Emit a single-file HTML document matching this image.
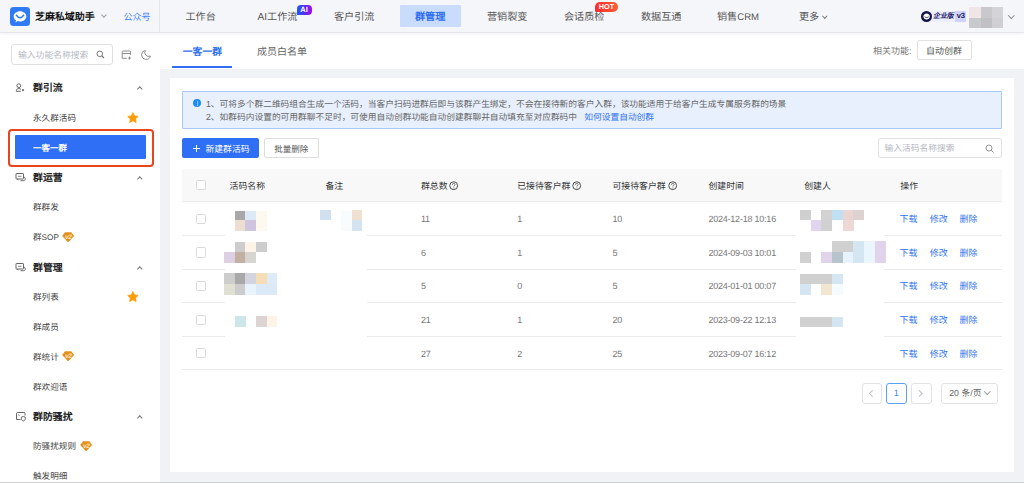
<!DOCTYPE html>
<html lang="zh-CN"><head><meta charset="utf-8">
<style>
*{margin:0;padding:0;box-sizing:border-box}
html,body{width:1024px;height:483px;overflow:hidden;background:#fff;text-rendering:geometricPrecision;font-family:"Liberation Sans",sans-serif;color:#333}
.a{position:absolute;white-space:nowrap}
#hdr{position:absolute;z-index:5;left:0;top:0;width:1024px;height:33px;background:#f5f6fa;border-bottom:1px solid #e6e7ea;box-shadow:0 1px 3px rgba(0,0,0,.06)}
#side{position:absolute;left:0;top:33px;width:160px;height:450px;background:#fff}
#main{position:absolute;left:160px;top:69px;width:864px;height:414px;background:#f1f2f6}
#tabs{position:absolute;left:160px;top:33px;width:864px;height:36px;background:#fff}
#card{position:absolute;left:169.5px;top:78px;width:844.5px;height:394px;background:#fff}
.nav{position:absolute;top:11px;font-size:10.15px;line-height:14px;color:#555}
.sh{position:absolute;left:33px;font-size:9.9px;font-weight:bold;color:#222;line-height:14px}
.si{position:absolute;left:33px;font-size:8.6px;color:#444;line-height:14px}
.car{position:absolute;left:138px;width:3.6px;height:3.6px;border-left:1px solid #777;border-top:1px solid #777;transform:rotate(45deg)}
.th{position:absolute;top:179.5px;font-size:8.9px;color:#333;line-height:13px}
.td{position:absolute;font-size:9px;letter-spacing:-.22px;color:#787878;line-height:13px}
.cb{position:absolute;left:195.6px;width:10.3px;height:10.3px;border:1px solid #d9d9d9;border-radius:1.5px;background:#fff}
.hl{position:absolute;left:182px;width:820px;height:1px;background:#ebebec}
.lk{position:absolute;font-size:9px;color:#2f74f0;line-height:13px}
.q{display:inline-block;width:9px;height:9px;border:1px solid #444;border-radius:50%;font-size:7px;line-height:7px;text-align:center;vertical-align:-1px;margin-left:2px;font-weight:bold}
.m{position:absolute;width:10.6px;height:10.6px}
.btn{position:absolute;border:1px solid #e0e0e2;border-radius:2px;background:#fff}
</style></head><body>

<div id="hdr">
 <div class="a" style="left:10px;top:7px;width:19.5px;height:19px;background:#2f7bf6;border-radius:3.5px"></div>
 <svg class="a" style="left:10px;top:7px" width="20" height="19" viewBox="0 0 20 19"><path d="M10 4.3c3.5 0 6.3 2.3 6.3 5.1s-2.8 5-6.3 5c-.8 0-1.5-.1-2.2-.3l-2.4 1.3.6-2C4.5 12.5 3.7 11 3.7 9.4 3.7 6.6 6.5 4.3 10 4.3z" fill="#fff"/><path d="M6.4 8.2Q10 13.2 13.6 8.2" stroke="#2f7bf6" stroke-width="1.5" fill="none" stroke-linecap="round"/></svg>
 <div class="a" style="left:35px;top:11px;font-size:9.95px;line-height:14px;font-weight:bold;color:#111">芝麻私域助手</div>
 <div class="a" style="left:101.5px;top:12.8px;width:3.8px;height:3.8px;border-right:1px solid #9a9a9a;border-bottom:1px solid #9a9a9a;transform:rotate(45deg)"></div>
 <div class="a" style="left:123.5px;top:11.4px;font-size:9px;line-height:13px;color:#4285f5">公众号</div>
 <div class="a" style="left:159px;top:0;width:1px;height:32px;background:#e4e6ee"></div>
 <div class="nav" style="left:185.5px">工作台</div>
 <div class="nav" style="left:257.5px">AI工作流</div>
 <div class="a" style="left:296.5px;top:4.5px;width:15px;height:10.5px;border-radius:4px 4px 4px 0;background:linear-gradient(90deg,#1d5af8,#5a2cf0 55%,#a80ae8);color:#fff;font-size:7.5px;font-weight:bold;line-height:10.5px;text-align:center">AI</div>
 <div class="nav" style="left:334px">客户引流</div>
 <div class="a" style="left:400px;top:5px;width:61px;height:22px;background:#c9dcfb;border-radius:1px"></div>
 <div class="nav" style="left:415px;color:#2f6ff0;font-weight:bold">群管理</div>
 <div class="nav" style="left:487px">营销裂变</div>
 <div class="nav" style="left:564px">会话质检</div>
 <div class="a" style="left:594.8px;top:2.1px;width:23.3px;height:9.5px;border-radius:5px 5px 5px 1px;background:linear-gradient(90deg,#ff2b2e,#ff5c33);color:#fff;font-size:7.2px;font-weight:bold;line-height:9.5px;text-align:center">HOT</div>
 <div class="nav" style="left:641px">数据互通</div>
 <div class="nav" style="left:717px">销售<span style="font-size:9.6px">CRM</span></div>
 <div class="nav" style="left:799px">更多</div>
 <div class="a" style="left:822.5px;top:14px;width:3.6px;height:3.6px;border-right:1px solid #777;border-bottom:1px solid #777;transform:rotate(45deg)"></div>
 <div class="a" style="left:931px;top:10.6px;width:35px;height:11px;background:#eceefd"></div>
 <div class="a" style="left:955px;top:10.6px;width:11px;height:11px;background:#cfd3fb"></div>
 <div class="a" style="left:920.6px;top:10.6px;width:11.2px;height:11.2px;border-radius:50%;background:#14154a"></div>
 <svg class="a" style="left:920.6px;top:10.6px" width="11.2" height="11.2" viewBox="0 0 12 12"><path d="M2.6 5.2c.3-1.6 1.7-2.6 3.4-2.6s3.1 1 3.4 2.6v.6c0 1.9-1.5 3.2-3.4 3.2S2.6 7.7 2.6 5.8z" fill="#fff"/><path d="M3.8 6.2c1 1 3.4 1 4.4 0" stroke="#14154a" stroke-width=".9" fill="none"/></svg>
 <div class="a" style="left:933px;top:10.5px;font-size:6.9px;line-height:12px;font-style:italic;font-weight:bold;color:#23236e">企业版</div>
 <div class="a" style="left:956.8px;top:10.3px;font-size:7.6px;line-height:12px;color:#1c1c58;letter-spacing:-.3px;font-weight:bold">v3</div>
 <div class="a" style="left:969px;top:7px;width:11.5px;height:10.5px;background:#f1e6e6"></div>
 <div class="a" style="left:980.5px;top:7px;width:11px;height:10.5px;background:#c9c9cd"></div>
 <div class="a" style="left:991.5px;top:7px;width:11.5px;height:10.5px;background:#d4d4d8"></div>
 <div class="a" style="left:969px;top:17.5px;width:11.5px;height:10.5px;background:#c8c9cd"></div>
 <div class="a" style="left:980.5px;top:17.5px;width:11px;height:10.5px;background:#c1c1c5"></div>
 <div class="a" style="left:991.5px;top:17.5px;width:11.5px;height:10.5px;background:#d0d0d4"></div>
 <div class="a" style="left:1008.5px;top:12.5px;width:4.5px;height:4.5px;border-right:1px solid #888;border-bottom:1px solid #888;transform:rotate(45deg)"></div>
</div>


<div id="side">
 <div class="a" style="left:11px;top:11px;width:102px;height:20.5px;border:1px solid #e0e0e2;border-radius:3px"></div>
 <div class="a" style="left:18px;top:15.5px;font-size:8.8px;line-height:13px;color:#b5b8bf">输入功能名称搜索</div>
 <svg class="a" style="left:96px;top:17px" width="9" height="9" viewBox="0 0 9 9"><circle cx="3.8" cy="3.8" r="2.8" stroke="#777" stroke-width="1" fill="none"/><path d="M5.9 5.9 8 8" stroke="#777" stroke-width="1.1"/></svg>
 <svg class="a" style="left:121px;top:16.5px" width="11" height="10" viewBox="0 0 11 10"><path d="M5.8 8.3H1.2V1.9q0-.9.9-.9h6.6q.9 0 .9.9v3" stroke="#8a8a8a" stroke-width=".95" fill="none"/><path d="M1.2 3.5h8.4" stroke="#8a8a8a" stroke-width=".95"/><path d="M8.5 6.6v3M7 8.1h3" stroke="#8a8a8a" stroke-width=".95"/></svg>
 <svg class="a" style="left:140px;top:15.5px" width="12" height="12" viewBox="0 0 12 12"><path d="M5.4 1.4A4.5 4.5 0 1 0 10.4 7 3.9 3.9 0 0 1 5.4 1.4z" stroke="#8a8a8a" stroke-width=".95" fill="none" stroke-linejoin="round"/></svg>

 <svg class="a" style="left:15px;top:48.5px" width="12" height="12" viewBox="0 0 12 12"><circle cx="3.8" cy="3.7" r="1.9" stroke="#555" stroke-width="0.9" fill="none"/><path d="M1.4 9.3V8.4c0-1.1 1.1-1.9 2.4-1.9 1 0 1.8.4 2.2 1" stroke="#555" stroke-width="0.9" fill="none"/><path d="M1.4 9.3h4.4" stroke="#555" stroke-width="0.9"/><path d="M6.9 8.1h2.2M8 7v2.2" stroke="#555" stroke-width="0.9"/></svg>
 <div class="sh" style="top:48.5px">群引流</div>
 <div class="car" style="top:54px"></div>
 <div class="si" style="top:77.5px">永久群活码</div>
 <svg class="a" style="left:126.9px;top:78.6px" width="11.8" height="11.2" viewBox="0 0 24 23"><path d="M12 1.2l3.3 6.8 7.4 1.1-5.4 5.2 1.3 7.4L12 18.2l-6.6 3.5 1.3-7.4-5.4-5.2 7.4-1.1z" fill="#ff9b05" stroke="#ff9b05" stroke-width="1.6" stroke-linejoin="round"/></svg>
 <div class="a" style="left:8.3px;top:95.8px;width:146px;height:38.5px;border:2px solid #e8441f;border-radius:4px"></div>
 <div class="a" style="left:15px;top:102px;width:131px;height:24px;background:#2f6ff5;border-radius:1px"></div>
 <div class="a" style="left:33px;top:107.5px;font-size:8.5px;line-height:14px;color:#fff;font-weight:bold">一客一群</div>

 <svg class="a" style="left:15px;top:139px" width="12" height="12" viewBox="0 0 12 12"><rect x="1" y="1.5" width="7.5" height="5.5" rx="0.6" stroke="#555" stroke-width="0.9" fill="none"/><path d="M3 4.3h3.5" stroke="#777" stroke-width="0.9"/><path d="M8.5 5c1.3.2 1.8.9 1.8 1.9 0 1.1-.8 1.8-2 1.8H5.6" stroke="#555" stroke-width="0.9" fill="none"/><path d="M2.5 7l.6 1.2" stroke="#555" stroke-width="0.9"/></svg>
 <div class="sh" style="top:138.5px">群运营</div>
 <div class="car" style="top:144px"></div>
 <div class="si" style="top:167px">群群发</div>
 <div class="si" style="top:197px">群<span style="font-size:8.2px">SOP</span></div>
 <svg class="a" style="left:61.9px;top:198.7px" width="12.4" height="10.6" viewBox="0 0 12.4 10.6"><path d="M3.1.3h6.2l2.9 3.6-6 6.5-6-6.5z" fill="#e3901e"/><text x="6.3" y="7.4" font-size="6.6" fill="#fbe3c0" text-anchor="middle" font-family="Liberation Sans" font-style="italic" font-weight="bold" letter-spacing="-.4">v2</text></svg>

 <svg class="a" style="left:15px;top:229px" width="12" height="12" viewBox="0 0 12 12"><rect x="1" y="1.5" width="7.5" height="5.5" rx="0.6" stroke="#555" stroke-width="0.9" fill="none"/><path d="M3 4.3h3.5" stroke="#777" stroke-width="0.9"/><path d="M8.5 5c1.3.2 1.8.9 1.8 1.9 0 1.1-.8 1.8-2 1.8H5.6" stroke="#555" stroke-width="0.9" fill="none"/><path d="M2.5 7l.6 1.2" stroke="#555" stroke-width="0.9"/></svg>
 <div class="sh" style="top:228.5px">群管理</div>
 <div class="car" style="top:234px"></div>
 <div class="si" style="top:257px">群列表</div>
 <svg class="a" style="left:126.9px;top:258.3px" width="11.8" height="11.2" viewBox="0 0 24 23"><path d="M12 1.2l3.3 6.8 7.4 1.1-5.4 5.2 1.3 7.4L12 18.2l-6.6 3.5 1.3-7.4-5.4-5.2 7.4-1.1z" fill="#ff9b05" stroke="#ff9b05" stroke-width="1.6" stroke-linejoin="round"/></svg>
 <div class="si" style="top:286.5px">群成员</div>
 <div class="si" style="top:317px">群统计</div>
 <svg class="a" style="left:61.9px;top:317.7px" width="12.4" height="10.6" viewBox="0 0 12.4 10.6"><path d="M3.1.3h6.2l2.9 3.6-6 6.5-6-6.5z" fill="#e3901e"/><text x="6.3" y="7.4" font-size="6.6" fill="#fbe3c0" text-anchor="middle" font-family="Liberation Sans" font-style="italic" font-weight="bold" letter-spacing="-.4">v2</text></svg>
 <div class="si" style="top:347px">群欢迎语</div>

 <svg class="a" style="left:15px;top:378px" width="12" height="12" viewBox="0 0 12 12"><path d="M1.5 8.5V2.5c0-.6.4-1 1-1h6.5c.6 0 1 .4 1 1v2" stroke="#555" stroke-width="0.9" fill="none"/><path d="M1.5 8.5h4" stroke="#555" stroke-width="0.9"/><path d="M3 3.5l1.5 1" stroke="#777" stroke-width="0.9"/><path d="M8.3 5.5l2 .7v1.6c0 1-.9 1.8-2 2.2-1.1-.4-2-1.2-2-2.2V6.2z" stroke="#555" stroke-width="0.9" fill="none"/></svg>
 <div class="sh" style="top:377.8px">群防骚扰</div>
 <div class="car" style="top:383px"></div>
 <div class="si" style="top:406px">防骚扰规则</div>
 <svg class="a" style="left:79.5px;top:407.7px" width="12.4" height="10.6" viewBox="0 0 12.4 10.6"><path d="M3.1.3h6.2l2.9 3.6-6 6.5-6-6.5z" fill="#e3901e"/><text x="6.3" y="7.4" font-size="6.6" fill="#fbe3c0" text-anchor="middle" font-family="Liberation Sans" font-style="italic" font-weight="bold" letter-spacing="-.4">v2</text></svg>
 <div class="si" style="top:435.5px">触发明细</div>
</div>


<div id="tabs">
 <div class="a" style="left:22.8px;top:13px;font-size:9.8px;line-height:14px;color:#2f6ff0;font-weight:bold">一客一群</div>
 <div class="a" style="left:12px;top:33px;width:60px;height:2px;background:#2f6ff0"></div>
 <div class="a" style="left:97px;top:12.5px;font-size:10px;line-height:14px;color:#666">成员白名单</div>
 <div class="a" style="left:713px;top:12px;font-size:9px;line-height:13px;color:#777">相关功能:</div>
 <div class="a" style="left:757px;top:7px;width:55px;height:20px;border:1px solid #e0e0e0;border-radius:2px"></div>
 <div class="a" style="left:766px;top:11.5px;font-size:9px;line-height:13px;color:#555">自动创群</div>
</div>

<div id="main"></div>

<div id="card"></div>
<div class="a" style="left:182px;top:91px;width:820px;height:37.5px;background:#e8f0fd;border:1px solid #a9c9f6;border-radius:1px"></div>
<div class="a" style="left:192.9px;top:98.8px;width:8.4px;height:8.4px;border-radius:50%;background:#1b8cfb"></div>
<div class="a" style="left:196.6px;top:100.5px;width:1px;height:1px;background:rgba(255,255,255,.55)"></div>
<div class="a" style="left:196.6px;top:102.2px;width:1px;height:3.4px;background:rgba(255,255,255,.55)"></div>
<div class="a" style="left:206px;top:97.5px;font-size:8.72px;line-height:13px;color:#666">1、可将多个群二维码组合生成一个活码，当客户扫码进群后即与该群产生绑定，不会在接待新的客户入群，该功能适用于给客户生成专属服务群的场景</div>
<div class="a" style="left:206px;top:110.7px;font-size:8.72px;line-height:13px;color:#666">2、如群码内设置的可用群聊不足时，可使用自动创群功能自动创建群聊并自动填充至对应群码中&nbsp;&nbsp;&nbsp;<span style="color:#2f74f0">如何设置自动创群</span></div>

<div class="a" style="left:182px;top:138px;width:77px;height:20.2px;background:#2f6ff5;border-radius:2px"></div>
<div class="a" style="left:193px;top:148.2px;width:7px;height:1.2px;background:#fff"></div>
<div class="a" style="left:196px;top:145.2px;width:1.2px;height:7px;background:#fff"></div>
<div class="a" style="left:205.5px;top:143px;font-size:8.8px;line-height:13px;color:#fff">新建群活码</div>
<div class="a" style="left:264.4px;top:138px;width:54.3px;height:20.2px;border:1px solid #dedede;border-radius:2px;background:#fff"></div>
<div class="a" style="left:274.3px;top:143px;font-size:8.5px;line-height:13px;color:#555">批量删除</div>

<div class="a" style="left:877.5px;top:138px;width:124px;height:20.2px;border:1px solid #e0e0e2;border-radius:3px;background:#fff"></div>
<div class="a" style="left:884.6px;top:142.2px;font-size:8.75px;line-height:13px;color:#b5b8bf">输入活码名称搜索</div>
<svg class="a" style="left:985px;top:143.5px" width="10" height="10" viewBox="0 0 10 10"><circle cx="4" cy="4" r="3" stroke="#8a8a8a" stroke-width=".9" fill="none"/><path d="M6.2 6.2 8.5 8.5" stroke="#8a8a8a" stroke-width="1"/></svg>

<div class="a" style="left:182px;top:168.8px;width:820px;height:33px;background:#f8f8f9"></div>
<div class="hl" style="top:201.4px"></div>
<div class="hl" style="top:235.0px"></div>
<div class="hl" style="top:268.6px"></div>
<div class="hl" style="top:302.2px"></div>
<div class="hl" style="top:335.8px"></div>
<div class="hl" style="top:369.4px"></div>
<div class="cb" style="top:180.2px"></div>
<div class="th" style="left:229.6px">活码名称</div>
<div class="th" style="left:325.4px">备注</div>
<div class="th" style="left:421px">群总数<svg style="position:absolute;right:-11.2px;top:1.9px" width="9.4" height="9.4" viewBox="0 0 10 10"><circle cx="5" cy="5" r="4.2" stroke="#444" stroke-width="1" fill="none"/><path d="M3.6 4c0-.9.6-1.5 1.4-1.5s1.4.5 1.4 1.3c0 .9-1.2 1-1.2 1.9v.3" stroke="#555" stroke-width=".9" fill="none"/><circle cx="5.2" cy="7.4" r=".55" fill="#555"/></svg></div>
<div class="th" style="left:517.2px">已接待客户群<svg style="position:absolute;right:-11.2px;top:1.9px" width="9.4" height="9.4" viewBox="0 0 10 10"><circle cx="5" cy="5" r="4.2" stroke="#444" stroke-width="1" fill="none"/><path d="M3.6 4c0-.9.6-1.5 1.4-1.5s1.4.5 1.4 1.3c0 .9-1.2 1-1.2 1.9v.3" stroke="#555" stroke-width=".9" fill="none"/><circle cx="5.2" cy="7.4" r=".55" fill="#555"/></svg></div>
<div class="th" style="left:612.5px">可接待客户群<svg style="position:absolute;right:-11.2px;top:1.9px" width="9.4" height="9.4" viewBox="0 0 10 10"><circle cx="5" cy="5" r="4.2" stroke="#444" stroke-width="1" fill="none"/><path d="M3.6 4c0-.9.6-1.5 1.4-1.5s1.4.5 1.4 1.3c0 .9-1.2 1-1.2 1.9v.3" stroke="#555" stroke-width=".9" fill="none"/><circle cx="5.2" cy="7.4" r=".55" fill="#555"/></svg></div>
<div class="th" style="left:708.4px">创建时间</div>
<div class="th" style="left:804.2px">创建人</div>
<div class="th" style="left:900.3px">操作</div>
<div class="cb" style="top:213.7px"></div>
<div class="td" style="left:421px;top:213.2px">11</div>
<div class="td" style="left:517.2px;top:213.2px">1</div>
<div class="td" style="left:612.5px;top:213.2px">10</div>
<div class="td" style="left:708.4px;top:213.2px">2024-12-18 10:16</div>
<div class="lk" style="left:899.4px;top:213.2px">下载</div>
<div class="lk" style="left:929.7px;top:213.2px">修改</div>
<div class="lk" style="left:959.4px;top:213.2px">删除</div>
<div class="cb" style="top:247.3px"></div>
<div class="td" style="left:421px;top:246.8px">6</div>
<div class="td" style="left:517.2px;top:246.8px">1</div>
<div class="td" style="left:612.5px;top:246.8px">5</div>
<div class="td" style="left:708.4px;top:246.8px">2024-09-03 10:01</div>
<div class="lk" style="left:899.4px;top:246.8px">下载</div>
<div class="lk" style="left:929.7px;top:246.8px">修改</div>
<div class="lk" style="left:959.4px;top:246.8px">删除</div>
<div class="cb" style="top:280.9px"></div>
<div class="td" style="left:421px;top:280.4px">5</div>
<div class="td" style="left:517.2px;top:280.4px">0</div>
<div class="td" style="left:612.5px;top:280.4px">5</div>
<div class="td" style="left:708.4px;top:280.4px">2024-01-01 00:07</div>
<div class="lk" style="left:899.4px;top:280.4px">下载</div>
<div class="lk" style="left:929.7px;top:280.4px">修改</div>
<div class="lk" style="left:959.4px;top:280.4px">删除</div>
<div class="cb" style="top:314.5px"></div>
<div class="td" style="left:421px;top:314.0px">21</div>
<div class="td" style="left:517.2px;top:314.0px">1</div>
<div class="td" style="left:612.5px;top:314.0px">20</div>
<div class="td" style="left:708.4px;top:314.0px">2023-09-22 12:13</div>
<div class="lk" style="left:899.4px;top:314.0px">下载</div>
<div class="lk" style="left:929.7px;top:314.0px">修改</div>
<div class="lk" style="left:959.4px;top:314.0px">删除</div>
<div class="cb" style="top:348.1px"></div>
<div class="td" style="left:421px;top:347.6px">27</div>
<div class="td" style="left:517.2px;top:347.6px">2</div>
<div class="td" style="left:612.5px;top:347.6px">25</div>
<div class="td" style="left:708.4px;top:347.6px">2023-09-07 16:12</div>
<div class="lk" style="left:899.4px;top:347.6px">下载</div>
<div class="lk" style="left:929.7px;top:347.6px">修改</div>
<div class="lk" style="left:959.4px;top:347.6px">删除</div>
<div class="a" style="left:224.6px;top:202.5px;width:142.4px;height:134px;background:#fff"></div>
<div class="a" style="left:796px;top:202.5px;width:88px;height:134px;background:#fff"></div>
<div class="a" style="left:234.8px;top:210.6px;width:10.9px;height:9.8px;background:#a8a8a8"></div>
<div class="a" style="left:245.2px;top:210.6px;width:10.9px;height:9.8px;background:#dde9f7"></div>
<div class="a" style="left:256px;top:210.6px;width:10.9px;height:9.8px;background:#fdf9ee"></div>
<div class="a" style="left:234.8px;top:220.1px;width:10.9px;height:11.0px;background:#ecdfd0"></div>
<div class="a" style="left:245.2px;top:220.1px;width:10.9px;height:11.0px;background:#cfc5de"></div>
<div class="a" style="left:256px;top:220.1px;width:10.9px;height:11.0px;background:#fdf9ee"></div>
<div class="a" style="left:234.9px;top:241.5px;width:10.9px;height:10.9px;background:#cdcdcd"></div>
<div class="a" style="left:245.4px;top:241.5px;width:10.9px;height:10.9px;background:#fdf3e6"></div>
<div class="a" style="left:255.9px;top:241.5px;width:10.9px;height:10.9px;background:#cdcdcd"></div>
<div class="a" style="left:224.3px;top:252.1px;width:10.9px;height:10.9px;background:#ddd0e2"></div>
<div class="a" style="left:234.9px;top:252.1px;width:10.9px;height:10.9px;background:#c2b1a3"></div>
<div class="a" style="left:245.4px;top:252.1px;width:10.9px;height:10.9px;background:#d6d5d2"></div>
<div class="a" style="left:224.3px;top:273.4px;width:10.9px;height:10.9px;background:#cdcdcd"></div>
<div class="a" style="left:234.9px;top:273.4px;width:10.9px;height:10.9px;background:#a9a9a9"></div>
<div class="a" style="left:245.4px;top:273.4px;width:10.9px;height:10.9px;background:#d4d3e0"></div>
<div class="a" style="left:255.9px;top:273.4px;width:10.9px;height:10.9px;background:#f5ddb8"></div>
<div class="a" style="left:266.5px;top:273.4px;width:10.9px;height:10.9px;background:#ddebf8"></div>
<div class="a" style="left:224.3px;top:283.8px;width:10.9px;height:10.9px;background:#e0e0d3"></div>
<div class="a" style="left:234.9px;top:283.8px;width:10.9px;height:10.9px;background:#cdcdcd"></div>
<div class="a" style="left:245.4px;top:283.8px;width:10.9px;height:10.9px;background:#e9f4fc"></div>
<div class="a" style="left:255.9px;top:283.8px;width:10.9px;height:10.9px;background:#dce9f6"></div>
<div class="a" style="left:266.5px;top:283.8px;width:10.9px;height:10.9px;background:#dce9f6"></div>
<div class="a" style="left:234.9px;top:316px;width:10.9px;height:11.1px;background:#cde6ea"></div>
<div class="a" style="left:255.9px;top:316px;width:10.9px;height:11.1px;background:#dcd3d3"></div>
<div class="a" style="left:266.5px;top:316px;width:10.9px;height:11.1px;background:#fdf3e6"></div>
<div class="a" style="left:320px;top:210.3px;width:10.8px;height:9.7px;background:#d0e0f0"></div>
<div class="a" style="left:341.4px;top:210.5px;width:10.5px;height:20.5px;background:#f8fcff"></div>
<div class="a" style="left:352.2px;top:210.3px;width:10.3px;height:9.7px;background:#efe0d0"></div>
<div class="a" style="left:352.2px;top:220px;width:10.3px;height:10.8px;background:#d4e2f2"></div>
<div class="a" style="left:800px;top:209.5px;width:10.9px;height:10.8px;background:#cfcfcf"></div>
<div class="a" style="left:821.25px;top:209.5px;width:10.9px;height:10.8px;background:#d2d2d0"></div>
<div class="a" style="left:832px;top:209.5px;width:10.9px;height:10.8px;background:#bfdff2"></div>
<div class="a" style="left:842.7px;top:209.5px;width:10.9px;height:10.8px;background:#ebd5d3"></div>
<div class="a" style="left:853.3px;top:209.5px;width:10.9px;height:10.8px;background:#ddd1d1"></div>
<div class="a" style="left:810.7px;top:220px;width:10.9px;height:11.1px;background:#e0d4ee"></div>
<div class="a" style="left:821.25px;top:220px;width:10.9px;height:11.1px;background:#d0d0d0"></div>
<div class="a" style="left:842.7px;top:220px;width:10.9px;height:11.1px;background:#edd8d6"></div>
<div class="a" style="left:831.9px;top:241.4px;width:10.9px;height:11.0px;background:#d0d0d0"></div>
<div class="a" style="left:842.7px;top:241.4px;width:10.9px;height:11.0px;background:#d0d0d0"></div>
<div class="a" style="left:853.3px;top:241.4px;width:10.9px;height:11.0px;background:#d3e6f2"></div>
<div class="a" style="left:864px;top:241.4px;width:10.9px;height:11.0px;background:#eaf5fc"></div>
<div class="a" style="left:874.7px;top:241.4px;width:10.9px;height:11.0px;background:#e0d3ea"></div>
<div class="a" style="left:800.1px;top:252.1px;width:10.9px;height:11.1px;background:#d0d0d0"></div>
<div class="a" style="left:821.4px;top:252.1px;width:10.9px;height:11.1px;background:#e0d3ea"></div>
<div class="a" style="left:831.9px;top:252.1px;width:10.9px;height:11.1px;background:#b8c4cc"></div>
<div class="a" style="left:842.7px;top:252.1px;width:10.9px;height:11.1px;background:#e8f2fc"></div>
<div class="a" style="left:853.3px;top:252.1px;width:10.9px;height:11.1px;background:#d3e6f2"></div>
<div class="a" style="left:864px;top:252.1px;width:10.9px;height:11.1px;background:#eaf5fc"></div>
<div class="a" style="left:874.7px;top:252.1px;width:10.9px;height:11.1px;background:#e0d3ea"></div>
<div class="a" style="left:800.1px;top:273.5px;width:10.9px;height:10.8px;background:#d0d0d0"></div>
<div class="a" style="left:810.8px;top:273.5px;width:10.9px;height:10.8px;background:#d0d0d0"></div>
<div class="a" style="left:821.4px;top:273.5px;width:10.9px;height:10.8px;background:#d0d0d0"></div>
<div class="a" style="left:831.9px;top:273.5px;width:10.9px;height:10.8px;background:#d3e6f2"></div>
<div class="a" style="left:800.1px;top:284px;width:10.9px;height:10.8px;background:#d3e6f2"></div>
<div class="a" style="left:821.4px;top:284px;width:10.9px;height:10.8px;background:#f2e6d0"></div>
<div class="a" style="left:831.9px;top:284px;width:10.9px;height:10.8px;background:#f5fbfe"></div>
<div class="a" style="left:800.1px;top:316.6px;width:10.9px;height:10.7px;background:#d0d0d0"></div>
<div class="a" style="left:810.8px;top:316.6px;width:10.9px;height:10.7px;background:#d0d0d0"></div>
<div class="a" style="left:821.4px;top:316.6px;width:10.9px;height:10.7px;background:#d0d0d0"></div>
<div class="a" style="left:831.9px;top:316.6px;width:10.9px;height:10.7px;background:#d3e6f2"></div>
<div class="btn" style="left:862.2px;top:383.3px;width:19.5px;height:20.3px;border-color:#e2e2e4;border-radius:3px"></div>
<div class="a" style="left:870.2px;top:390.5px;width:4.6px;height:4.6px;border-left:1px solid #b8bcc4;border-bottom:1px solid #b8bcc4;transform:rotate(45deg)"></div>
<div class="btn" style="left:886.2px;top:383.3px;width:20.4px;height:20.3px;border-color:#5aa2f5;border-radius:3px"></div>
<div class="a" style="left:886.2px;top:387px;width:20.4px;text-align:center;font-size:9.2px;line-height:13px;color:#3d8bf2">1</div>
<div class="btn" style="left:911.2px;top:383.3px;width:20.4px;height:20.3px;border-color:#e2e2e4;border-radius:3px"></div>
<div class="a" style="left:917px;top:390.5px;width:4.6px;height:4.6px;border-right:1px solid #b8bcc4;border-top:1px solid #b8bcc4;transform:rotate(45deg)"></div>
<div class="btn" style="left:941.4px;top:383.3px;width:56.5px;height:20.3px;border-color:#e2e2e4;border-radius:3px"></div>
<div class="a" style="left:949.2px;top:387px;font-size:8.8px;line-height:13px;color:#666">20 条/页</div>
<div class="a" style="left:984.5px;top:389px;width:4.5px;height:4.5px;border-right:1px solid #999;border-bottom:1px solid #999;transform:rotate(45deg)"></div>
<div class="a" style="left:0;top:482px;width:1024px;height:1px;background:#cdd1d5"></div>
</body></html>
